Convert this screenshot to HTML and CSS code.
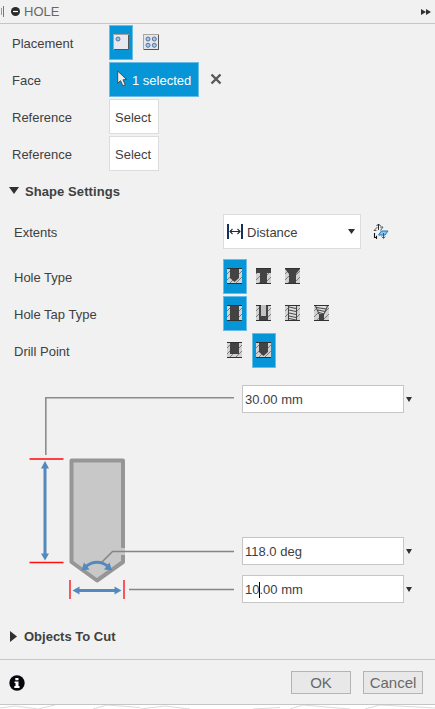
FILE: index.html
```html
<!DOCTYPE html>
<html lang="en">
<head>
<meta charset="utf-8">
<title>Hole</title>
<link rel="stylesheet" href="styles.css">
</head>
<body>
<svg class="defs" width="0" height="0">
  <defs>
    <pattern id="hatch" width="6" height="6" patternUnits="userSpaceOnUse">
      <rect width="6" height="6" fill="#d2d2d2"/>
      <path d="M-1 7L7 -1M-1 1L1 -1M5 7L7 5" stroke="#7d7d7d" stroke-width="1"/>
    </pattern>
    <g id="block"><rect width="15" height="16" fill="url(#hatch)"/></g>
    <path id="edges" d="M0 .5H15M0 15.5H15" stroke="#303030"/>
  </defs>
</svg>
<main class="panel">
  <header class="head">
    <i class="grip"></i>
    <svg class="collapse" width="9" height="9" viewBox="0 0 9 9"><circle cx="4.5" cy="4.5" r="4.5" fill="#2b2b2b"/><path d="M2 4.5H7" stroke="#fff" stroke-width="1.2"/></svg>
    <h1>HOLE</h1>
    <svg class="forward" width="10" height="6" viewBox="0 0 10 6"><path d="M0 0L5 3L0 6ZM5 0L10 3L5 6Z" fill="#303236"/></svg>
  </header>

  <section class="inputs">
    <div class="row"><span class="label">Placement</span>
      <button class="tile on"><svg width="16" height="16" viewBox="0 0 16 16"><rect x=".5" y=".5" width="15" height="15" fill="#e6e8ef" stroke="#a7a39f"/><path d="M1 15.5H15.5V1" fill="none" stroke="#555"/><circle cx="5" cy="5" r="2" fill="#9ebfe6" stroke="#50739d"/></svg></button>
      <button class="tile"><svg width="16" height="16" viewBox="0 0 16 16"><rect x=".5" y=".5" width="15" height="15" fill="#e6e6ea" stroke="#aaa6a3"/><path d="M1 15.5H15.5V1" fill="none" stroke="#555"/><g fill="#a9c7ea" stroke="#50739d"><circle cx="5" cy="5" r="2"/><circle cx="11.3" cy="5" r="2"/><circle cx="5" cy="11.3" r="2"/><circle cx="11.3" cy="11.3" r="2"/></g></svg></button>
    </div>
    <div class="row"><span class="label">Face</span>
      <button class="pick on"><svg width="11" height="17" viewBox="0 0 11 17"><path d="M.7 1V13.2L3.5 10.7L5.8 15.8L8.2 14.7L6 9.8L9.6 9.5Z" fill="#eee" stroke="#4b4b4b"/></svg><span>1 selected</span></button>
      <svg class="clear" width="12" height="12" viewBox="0 0 12 12"><path d="M1.5 1.5L10.5 10.5M10.5 1.5L1.5 10.5" stroke="#595959" stroke-width="2.4"/></svg>
    </div>
    <div class="row"><span class="label">Reference</span><button class="pick">Select</button></div>
    <div class="row"><span class="label">Reference</span><button class="pick">Select</button></div>
  </section>

  <h2 class="group"><svg width="10" height="7" viewBox="0 0 10 7"><path d="M0 0H10L5 7Z" fill="#303030"/></svg><span>Shape Settings</span></h2>

  <section class="shape">
    <div class="row extents"><span class="label">Extents</span>
      <div class="select">
        <svg width="16" height="15" viewBox="0 0 16 15"><path d="M1 0V15M15 0V15" stroke="#15305a" stroke-width="2"/><path d="M3 7.5H13M5.5 5L3 7.5L5.5 10M10.5 5L13 7.5L10.5 10" fill="none" stroke="#222a36" stroke-width="1.1"/></svg>
        <span>Distance</span>
        <svg width="7" height="5" viewBox="0 0 7 5"><path d="M0 0H7L3.5 5Z" fill="#303030"/></svg>
      </div>
      <svg class="flip" width="16" height="17" viewBox="0 0 16 17"><path d="M3.5 7.5H1L4.5 4M7 4H10L7.5 7.5" fill="none" stroke="#555"/><path d="M5.5 7V1M3.5 3L5.5 1L7.5 3" fill="none" stroke="#303030"/><path d="M8.5 8H15L12 12H5.5Z" fill="#8dc3ed" stroke="#1976b8"/><path d="M10.5 10V15M8.8 13.5L10.5 15.5L12.2 13.5" fill="none" stroke="#0868b5"/><path d="M1.5 10V14.5H4M3.5 12.8V16" fill="none" stroke="#111" stroke-width="1.1"/></svg>
    </div>
    <div class="row"><span class="label">Hole Type</span>
      <button class="tile on"><svg width="15" height="16"><use href="#block"/><path d="M3 0H12V10L7.5 14L3 10Z" fill="#434343"/><use href="#edges"/></svg></button>
      <button class="tile"><svg width="15" height="16"><use href="#block"/><path d="M0 0H15V5H11V16H4V5H0Z" fill="#434343"/><use href="#edges"/></svg></button>
      <button class="tile"><svg width="15" height="16"><use href="#block"/><path d="M0 0H15V1L11 6V16H4V6L0 1Z" fill="#434343"/><use href="#edges"/></svg></button>
    </div>
    <div class="row"><span class="label">Hole Tap Type</span>
      <button class="tile on"><svg width="15" height="16"><use href="#block"/><path d="M3 0H12V16H3Z" fill="#434343"/><use href="#edges"/></svg></button>
      <button class="tile"><svg width="15" height="16"><use href="#block"/><path d="M3 0H12V16H3Z" fill="#434343"/><use href="#edges"/><path d="M5 0H10V11H5Z" fill="#c2c2c2"/></svg></button>
      <button class="tile"><svg width="15" height="16"><use href="#block"/><path d="M3.5 0H11.5V16H3.5Z" fill="#ddd"/><path d="M3.5 0V16M11.5 0V16" stroke="#444"/><path d="M4 2L11 3.5M4 5L11 6.5M4 8L11 9.5M4 11L11 12.5M4 13.5L11 15" stroke="#4c4c4c" stroke-width="1.2"/><use href="#edges"/></svg></button>
      <button class="tile"><svg width="15" height="16"><use href="#block"/><path d="M1.5 1H13.5L10 9V16H5V9Z" fill="#e0e0e0"/><path d="M1.5 1L5 9M13.5 1L10 9M2.5 2.5L12 4M4 5L11 6.5M5 7.5L10 9" stroke="#484848" stroke-width="1.1"/><path d="M5 9H10V16H5Z" fill="#434343"/><use href="#edges"/></svg></button>
    </div>
    <div class="row"><span class="label">Drill Point</span>
      <button class="tile"><svg width="15" height="16"><use href="#block"/><path d="M3 0H12V12H3Z" fill="#434343"/><use href="#edges"/></svg></button>
      <button class="tile on"><svg width="15" height="16"><use href="#block"/><path d="M3 0H12V10L7.5 14L3 10Z" fill="#434343"/><use href="#edges"/></svg></button>
    </div>
  </section>

  <section class="dims">
    <svg class="drawing" width="242" height="230" viewBox="0 0 242 230">
      <path d="M71.5 80.5H123V182L97 200.5L71.5 182Z" fill="#c8c8c8" stroke="#969696" stroke-width="4" stroke-linejoin="round"/>
      <path d="M123 168V175" stroke="#c8c8c8" stroke-width="4"/>
      <path d="M45.8 75V17.8H234" fill="none" stroke="#8c8c8c" stroke-width="1.6"/>
      <path d="M101.5 182.5L112.5 171.4H234M129 209.5H234" fill="none" stroke="#858585" stroke-width="1.5"/>
      <path d="M29.5 79H63.5" stroke="#ff4141" stroke-width="2"/><path d="M29.5 182.5H63.5" stroke="#ff1010" stroke-width="1.4"/>
      <path d="M70 200V219M124 200V219" stroke="#fa3c42" stroke-width="1.7"/>
      <path d="M45 86V176M77 210.5H117M85 187Q97 177.5 109 187" fill="none" stroke="#5489bd" stroke-width="3"/>
      <g fill="#5489bd"><path d="M45 81L49 88.5H41ZM45 180.5L49 173.5H41ZM72.5 210.5L79.5 206.5V214.5ZM121.5 210.5L114.5 206.5V214.5ZM81.5 190.5L84 182.5L89.5 189.5ZM112 190.5L109.5 182.5L104 189.5Z"/></g>
    </svg>
    <div class="fields">
      <div class="field"><div class="value">30.00 mm</div><i class="arrow"></i></div>
      <div class="field"><div class="value">118.0 deg</div><i class="arrow"></i></div>
      <div class="field"><div class="value">10<i class="caret"></i>.00 mm</div><i class="arrow"></i></div>
    </div>
  </section>

  <h2 class="group cut"><svg width="7" height="11" viewBox="0 0 7 11"><path d="M0 0L7 5.5L0 11Z" fill="#303030"/></svg>Objects To Cut</h2>

  <footer class="foot">
    <svg class="info" width="16" height="16" viewBox="0 0 16 16"><circle cx="8" cy="8" r="7.7" fill="#05070b"/><path d="M6.3 3H9.5V5.3H6.3ZM5.5 6.5H9.5V11H10.5V13H5.3V11H6.5V8H5.5Z" fill="#fff"/></svg>
    <button class="action ok">OK</button><button class="action">Cancel</button>
  </footer>
</main>
<svg class="canvas" width="435" height="4" viewBox="0 0 435 4"><path d="M0 3L15 1L38 4M38 4L55 0M93 4L107 0L140 2.5M140 4L165 1L190 4M253 4L280 2.5M290 4L303 0L350 4M365 4L380 0L435 3" fill="none" stroke="#d0d0d0" stroke-width=".8"/></svg>
</body>
</html>
```
FILE: styles.css
```css
* { box-sizing: border-box; }
body {
  margin: 0;
  width: 435px;
  height: 709px;
  overflow: hidden;
  background: #fff;
  color: #404040;
  font: 13px/16px "Liberation Sans", Arial, sans-serif;
}
h1, h2 { margin: 0; }
button {
  margin: 0;
  padding: 0;
  border: 0;
  background: none;
  color: inherit;
  font: inherit;
}
svg { display: block; flex: none; }
.defs { position: absolute; }
.panel { height: 705px; background: #f1f1f1; border-bottom: 1px solid #c6c6c6; }
.head {
  display: flex;
  align-items: center;
  height: 24px;
  border-bottom: 1px solid #c6c6c6;
}
.grip { width: 4px; height: 11px; border-right: 1px solid #777; background: linear-gradient(#999, #999) 1px 2px / 1px 7px no-repeat; }
.collapse { margin: 0 4px 0 7px; }
h1 { color: #686868; font-size: 13px; font-weight: 400; }
.forward { margin-left: auto; margin-right: 4px; }
.row { display: flex; align-items: center; height: 37px; padding-left: 12px; }
.label { width: 97px; flex: none; padding-top: 2px; }
.tile {
  display: flex;
  align-items: flex-start;
  width: 24px;
  height: 35px;
  margin-right: 5px;
  padding: 8px 0 0 3px;
  border: 1px solid transparent;
}
.inputs .tile + .tile { padding-left: 4px; }
.tile.on, .pick.on { background: #0696d7; border: 1px solid #68bce5; }
.pick {
  display: flex;
  align-items: center;
  width: 50px;
  height: 35px;
  padding: 2px 0 0 5px;
  border: 1px solid #dcdcdc;
  background: #fff;
}
.pick.on { width: 90px; padding: 0 0 0 7px; color: #fff; }
.pick.on svg { margin-right: 4px; margin-top: -2px; }
.pick.on span { padding-top: 2px; white-space: nowrap; }
.clear { margin-left: 11px; margin-top: -2px; }
.group {
  display: flex;
  align-items: center;
  height: 38px;
  padding-left: 9px;
  font-size: 13px;
  gap: 6px;
}
.group svg { margin-top: -2px; }
.group span { padding-top: 2px; letter-spacing: .08px; }
.shape .row { padding-left: 14px; }
.shape .label { width: 209px; }
.extents { margin: 3px 0 8px; }
.select {
  display: flex;
  align-items: center;
  width: 138px;
  height: 35px;
  padding: 0 5px 0 3px;
  border: 1px solid #dcdcdc;
  background: #fff;
}
.select span { flex: 1; padding: 2px 0 0 4px; }
.flip { margin-left: 12px; margin-top: -1px; }
.dims { display: flex; height: 235px; margin-top: 11px; }
.fields { padding-top: 5px; }
.field { display: flex; align-items: center; height: 28px; }
.field + .field { margin-top: 124px; }
.field + .field + .field { margin-top: 10px; }
.value {
  width: 162px;
  height: 28px;
  padding: 6px 2px 0;
  border: 1px solid #c6c6c6;
  background: #fff;
  white-space: nowrap;
}
.caret { display: inline-block; width: 1px; height: 16px; margin-right: -1px; background: #000; vertical-align: top; }
.arrow { margin-left: 2px; border: 3.5px solid transparent; border-top: 5px solid #303030; border-bottom: 0; }
.cut { height: 44px; padding-left: 10px; gap: 7px; }
.foot { display: flex; align-items: center; height: 45px; border-top: 1px solid #c6c6c6; padding: 1px 12px 0 9px; }
.action { width: 60px; height: 23px; border: 1px solid #b4b4b4; background: #e8e8e8; color: #686868; font-size: 15px; }
.action + .action { margin-left: 12px; }
.ok { margin-left: auto; }
```
